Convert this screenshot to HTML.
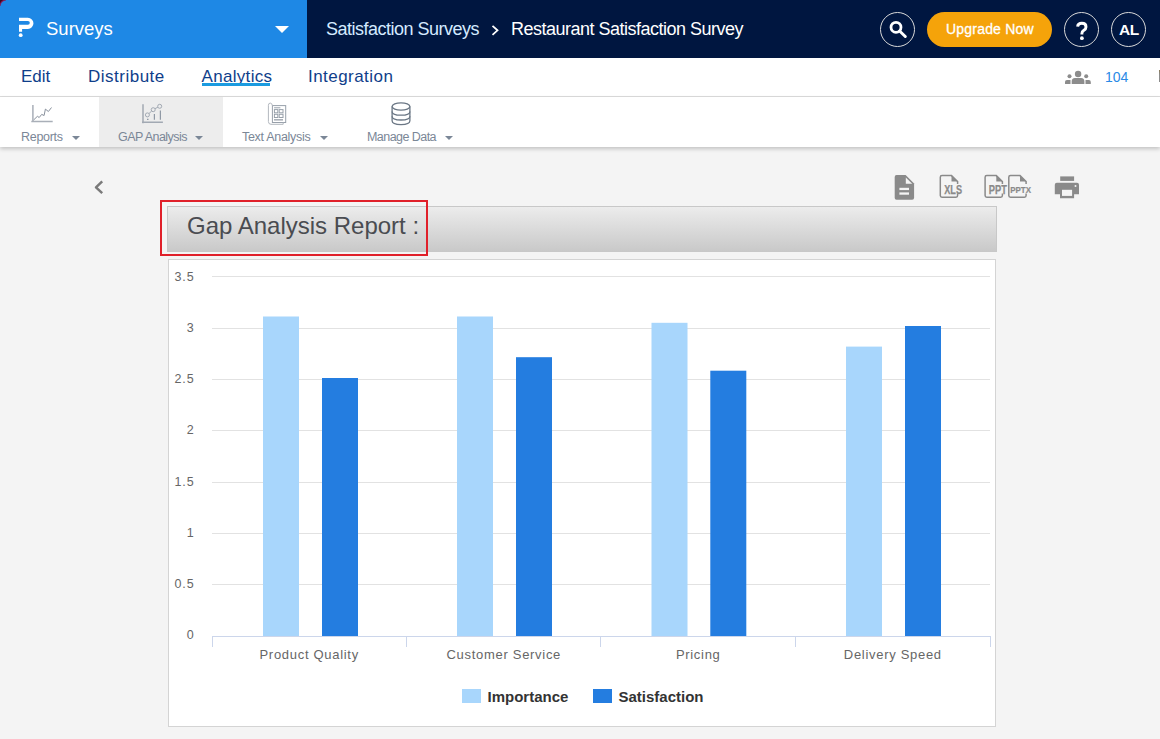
<!DOCTYPE html>
<html><head><meta charset="utf-8">
<style>
*{box-sizing:border-box;margin:0;padding:0}
html,body{width:1160px;height:739px;overflow:hidden;background:#f4f4f4;font-family:"Liberation Sans",sans-serif;position:relative}
.abs{position:absolute}
.t{position:absolute;white-space:nowrap;line-height:1}
.nv{color:#0f3e8a;font-size:17px}
.sl{color:#7b8797;font-size:12.5px;letter-spacing:-0.3px}
.tri{position:absolute;width:0;height:0;border-left:4px solid transparent;border-right:4px solid transparent;border-top:4px solid #7b8797;margin-top:0}
.circ{position:absolute;top:12px;width:35px;height:35px;border:1.2px solid #d8d8d8;border-radius:50%}
</style></head><body>
<!-- top bar -->
<div class="abs" style="left:0;top:0;width:1160px;height:58px;background:#001640"></div>
<div class="abs" style="left:0;top:0;width:307px;height:58px;background:#1e88e5"></div>
<svg class="abs" style="left:0;top:0" width="8" height="8" viewBox="0 0 8 8"><path d="M0 0 H6 A6 6 0 0 0 0 6 Z" fill="#3a0a1e"/><path d="M6 0 A6 6 0 0 0 0 6" fill="none" stroke="#a01050" stroke-width="1.2" opacity="0.7"/></svg>
<svg class="abs" style="left:0;top:0" width="40" height="45" viewBox="0 0 40 45">
 <path d="M19 17.8 H27.9 A5.55 5.55 0 0 1 27.9 28.9 H22.1 V31.8 H19 V24.7 H27.9 A1.9 1.9 0 0 0 27.9 20.9 H19 Z" fill="#fff"/>
 <circle cx="20.7" cy="35.2" r="1.9" fill="#fff"/>
</svg>
<div class="t" style="left:46px;top:20px;font-size:18.5px;color:#fff">Surveys</div>
<div class="abs" style="left:275px;top:26px;width:0;height:0;border-left:7px solid transparent;border-right:7px solid transparent;border-top:7px solid #fff"></div>
<div class="t" style="left:326px;top:20px;font-size:18px;color:#d4eaff;letter-spacing:-0.5px">Satisfaction Surveys</div>
<svg class="abs" style="left:488px;top:22px" width="14" height="16" viewBox="0 0 14 16"><path d="M4.5 3.8 L9.5 8.3 L4.5 12.8" fill="none" stroke="#fff" stroke-width="1.8"/></svg>
<div class="t" style="left:511px;top:20px;font-size:18px;color:#fff;letter-spacing:-0.5px">Restaurant Satisfaction Survey</div>
<div class="circ" style="left:880px"></div>
<svg class="abs" style="left:880px;top:12px" width="35" height="35" viewBox="0 0 35 35">
 <circle cx="16" cy="15.3" r="5" fill="none" stroke="#fff" stroke-width="2.8"/>
 <path d="M19.6 19 L25.3 24.5" stroke="#fff" stroke-width="3" stroke-linecap="round"/>
</svg>
<div class="abs" style="left:927px;top:12px;width:125px;height:35px;border-radius:18px;background:#f5a30a"></div>
<div class="t" style="left:946px;top:22px;font-size:14px;letter-spacing:0.2px;color:#fff;-webkit-text-stroke:0.3px #fff">Upgrade Now</div>
<div class="circ" style="left:1064px"></div>
<div class="circ" style="left:1111px"></div>
<svg class="abs" style="left:1064px;top:12px" width="35" height="35" viewBox="1064 12 35 35"><path d="M1077.6 26.6 Q1077.9 23.3 1081.9 23.3 Q1086 23.3 1086 26.9 Q1086 29.1 1083.6 30.6 Q1081.9 31.7 1081.9 33.6 V34.6" fill="none" stroke="#fff" stroke-width="2.9"/><circle cx="1081.9" cy="38.2" r="1.9" fill="#fff"/></svg>
<div class="t" style="left:1119px;top:22px;font-size:15.5px;color:#fff;font-weight:bold;letter-spacing:-0.4px">AL</div>

<!-- nav -->
<div class="abs" style="left:0;top:58px;width:1160px;height:39px;background:#fff;border-bottom:1px solid #dcdcdc"></div>
<div class="t nv" style="left:21px;top:68px">Edit</div>
<div class="t nv" style="left:88px;top:68px;letter-spacing:0.5px">Distribute</div>
<div class="t nv" style="left:201.6px;top:68px;letter-spacing:0.3px">Analytics</div>
<div class="abs" style="left:202px;top:83px;width:68px;height:3px;background:#1b9be0"></div>
<div class="t nv" style="left:308px;top:68px;letter-spacing:0.45px">Integration</div>
<svg class="abs" style="left:1060px;top:66px" width="35" height="22" viewBox="0 0 35 22">
 <g fill="#8c8c8c">
 <circle cx="18.1" cy="8" r="3.2"/>
 <path d="M11.7 18 V15.5 Q11.7 12 15 12 H21.2 Q24.4 12 24.4 15.5 V18 Z"/>
 <circle cx="9.5" cy="10.3" r="2"/>
 <path d="M5 18 V16 Q5 14 7 14 H10.5 V18 Z"/>
 <circle cx="26.2" cy="10.3" r="2"/>
 <path d="M25.5 18 V14 H28.8 Q30.8 14 30.8 16 V18 Z"/>
 </g>
</svg>
<div class="t" style="left:1105px;top:70px;font-size:14px;color:#2a8ae6">104</div>
<div class="abs" style="left:1159px;top:70px;width:1px;height:12px;background:linear-gradient(#8a7a58,#8c8c8c 40%)"></div>

<!-- subnav -->
<div class="abs" style="left:0;top:97px;width:1160px;height:50px;background:#fff;box-shadow:0 2px 4px rgba(0,0,0,.2)"></div>
<div class="abs" style="left:99px;top:97px;width:124px;height:50px;background:#ededed"></div>
<svg class="abs" style="left:0;top:97px" width="470" height="32" viewBox="0 97 470 32">
 <g fill="none" stroke="#a9afb8" stroke-width="1.5">
  <path d="M32.9 105 V122 M31.3 121.5 H52.7"/>
 </g>
 <path d="M33.7 119.9 L37.4 116.3 L39.2 117.5 L41.7 114.4 L44.1 115.5 L45.4 109.1 L48.4 111.5 L51.5 107.5" fill="none" stroke="#7c8592" stroke-width="0.9"/>
 <g fill="none" stroke="#a2a9b3" stroke-width="1.5">
  <path d="M143 104.2 V123.2 M142 122.3 H162.9"/>
 </g>
 <g fill="none" stroke="#a2a9b3" stroke-width="1">
  <circle cx="147.4" cy="114.9" r="2"/><circle cx="153.2" cy="109.7" r="2"/><circle cx="159.7" cy="106.3" r="2"/>
  <path d="M149 113.5 L151.6 111.1 M154.9 108.7 L157.9 107.2"/>
 </g>
 <g fill="none" stroke="#9099a5" stroke-width="1.2">
  <path d="M154.4 114 V119.7 M160.4 110.5 V119.7 M147 119.3 H148.5"/>
 </g>
 <g fill="none" stroke="#98a0aa" stroke-width="1">
  <rect x="272.4" y="105.6" width="13.3" height="16.9"/>
  <path d="M274.1 107.8 H280.4"/>
  <rect x="274.4" y="109.6" width="3.4" height="3.2"/><rect x="279.2" y="109.6" width="3.8" height="3.2"/>
  <rect x="274.4" y="114.3" width="3.4" height="3.2"/><rect x="279.2" y="114.3" width="3.8" height="3.2"/>
 </g>
 <path d="M272.4 105.6 Q272 103.1 270.3 103.1 Q268.4 103.1 268.4 105.3 V121.5 Q268.4 124.3 271 124.3 H283.2 V122.5" fill="none" stroke="#b3b8bf" stroke-width="1"/>
 <rect x="274" y="119" width="9" height="1.6" fill="#a9afb7"/>
 <g fill="none" stroke="#6b7785" stroke-width="1.3">
  <ellipse cx="401" cy="106.5" rx="8.9" ry="3.7"/>
  <path d="M392.1 106.5 V120.8 Q392.1 124.6 401 124.6 Q409.9 124.6 409.9 120.8 V106.5"/>
  <path d="M392.1 111.4 Q392.1 115.2 401 115.2 Q409.9 115.2 409.9 111.4"/>
  <path d="M392.1 116.2 Q392.1 120 401 120 Q409.9 120 409.9 116.2"/>
 </g>
</svg>
<div class="t sl" style="left:21px;top:131px">Reports</div>
<div class="tri" style="left:72px;top:136px"></div>
<div class="t sl" style="left:118px;top:131px;letter-spacing:-0.55px">GAP Analysis</div>
<div class="tri" style="left:195px;top:136px"></div>
<div class="t sl" style="left:242px;top:131px">Text Analysis</div>
<div class="tri" style="left:320px;top:136px"></div>
<div class="t sl" style="left:367px;top:131px;letter-spacing:-0.55px">Manage Data</div>
<div class="tri" style="left:445px;top:136px"></div>

<!-- back + export icons -->
<svg class="abs" style="left:85px;top:170px" width="30" height="30" viewBox="85 170 30 30">
 <path d="M102.2 181.4 L96 187.3 L102.2 193.1" fill="none" stroke="#7a7a7a" stroke-width="2.5" stroke-linejoin="round"/>
</svg>
<svg class="abs" style="left:880px;top:168px" width="210" height="36" viewBox="880 168 210 36">
 <path d="M896.5 175 H905.6 L914.1 183.5 V197.8 Q914.1 199.8 912.1 199.8 H896.5 Q894.7 199.8 894.7 197.8 V177 Q894.7 175 896.5 175 Z" fill="#8a8a8a"/>
 <path d="M905.8 177.4 V183.8 H912.2 Z" fill="#f4f4f4"/>
 <rect x="899.4" y="187.8" width="9.6" height="2.3" fill="#f4f4f4"/>
 <rect x="899.4" y="192.4" width="9.6" height="2.3" fill="#f4f4f4"/>
 <g fill="none" stroke="#8a8a8a" stroke-width="1.5">
  <path d="M957.6 184 V181.5 L951.5 175.6 H942 Q940.3 175.6 940.3 177.3 V195.6 Q940.3 197.3 942 197.3 H956 Q957.6 197.3 957.6 195.6 V193.5"/>
  <path d="M1002.4 184 V181.5 L996.3 175.6 H986.8 Q985.1 175.6 985.1 177.3 V195.6 Q985.1 197.3 986.8 197.3 H1000.8 Q1002.4 197.3 1002.4 195.6 V193.5"/>
  <path d="M1026.1 184 V181.5 L1020 175.6 H1010.5 Q1008.8 175.6 1008.8 177.3 V195.6 Q1008.8 197.3 1010.5 197.3 H1024.5 Q1026.1 197.3 1026.1 195.6 V193.5"/>
 </g>
 <path d="M951.5 175.6 L957.6 181.5 H951.5 Z M996.3 175.6 L1002.4 181.5 H996.3 Z M1020 175.6 L1026.1 181.5 H1020 Z" fill="#8a8a8a"/>
 <g font-family="Liberation Sans" font-weight="bold" fill="#8a8a8a">
  <text x="944.2" y="193.8" font-size="12.2" textLength="17.8" lengthAdjust="spacingAndGlyphs" stroke="#8a8a8a" stroke-width="0.25">XLS</text>
  <text x="988.8" y="193.8" font-size="12.2" textLength="18" lengthAdjust="spacingAndGlyphs" stroke="#8a8a8a" stroke-width="0.25">PPT</text>
  <text x="1010.2" y="192.9" font-size="9.4" textLength="20.8" lengthAdjust="spacingAndGlyphs" stroke="#8a8a8a" stroke-width="0.2">PPTX</text>
 </g>
 <rect x="1060.2" y="176.4" width="13.9" height="4.5" fill="#8a8a8a"/>
 <path d="M1056.8 182.7 H1077 Q1079 182.7 1079 184.7 V194.3 H1074.1 V198.2 H1060 V194.3 H1054.8 V184.7 Q1054.8 182.7 1056.8 182.7 Z" fill="#8a8a8a"/>
 <rect x="1062" y="189.8" width="10.1" height="6.1" fill="#f4f4f4"/>
 <circle cx="1075.5" cy="186.1" r="1" fill="#f4f4f4"/>
</svg>

<!-- report header -->
<div class="abs" style="left:167px;top:206px;width:830px;height:46px;border:1px solid #c8c8c8;background:linear-gradient(#ececec,#c9c9c9)"></div>
<div class="t" style="left:187px;top:214px;font-size:24px;color:#4a4c51;letter-spacing:0">Gap Analysis Report :</div>
<div class="abs" style="left:160px;top:200px;width:268px;height:56px;border:2px solid #e0202a"></div>

<!-- chart -->
<div class="abs" style="left:168px;top:259px;width:828px;height:468px;background:#fff;border:1px solid #d4d4d4"></div>
<!-- CHARTSVG -->
<svg class="abs" style="left:0;top:0" width="1160" height="739" viewBox="0 0 1160 739">
<rect x="212" y="584" width="778" height="1" fill="#e2e2e2"/>
<rect x="212" y="533" width="778" height="1" fill="#e2e2e2"/>
<rect x="212" y="482" width="778" height="1" fill="#e2e2e2"/>
<rect x="212" y="430" width="778" height="1" fill="#e2e2e2"/>
<rect x="212" y="379" width="778" height="1" fill="#e2e2e2"/>
<rect x="212" y="328" width="778" height="1" fill="#e2e2e2"/>
<rect x="212" y="276" width="778" height="1" fill="#e2e2e2"/>
<rect x="263" y="316.5" width="36" height="319.5" fill="#a8d6fc"/>
<rect x="322" y="378" width="36" height="258.0" fill="#247de0"/>
<rect x="457" y="316.5" width="36" height="319.5" fill="#a8d6fc"/>
<rect x="516" y="357.2" width="36" height="278.8" fill="#247de0"/>
<rect x="651.5" y="322.8" width="36" height="313.2" fill="#a8d6fc"/>
<rect x="710.3" y="370.7" width="36" height="265.3" fill="#247de0"/>
<rect x="846" y="346.6" width="36" height="289.4" fill="#a8d6fc"/>
<rect x="905" y="326" width="36" height="310.0" fill="#247de0"/>
<rect x="212" y="636" width="779" height="1" fill="#ccd6eb"/>
<rect x="212" y="636" width="1" height="11" fill="#ccd6eb"/>
<rect x="406" y="636" width="1" height="11" fill="#ccd6eb"/>
<rect x="600" y="636" width="1" height="11" fill="#ccd6eb"/>
<rect x="795" y="636" width="1" height="11" fill="#ccd6eb"/>
<rect x="990" y="636" width="1" height="11" fill="#ccd6eb"/>
<g font-family="Liberation Sans" font-size="12.5" fill="#666" letter-spacing="0.9">
<text x="194.6" y="639" text-anchor="end">0</text>
<text x="194.6" y="587.9" text-anchor="end">0.5</text>
<text x="194.6" y="536.9" text-anchor="end">1</text>
<text x="194.6" y="485.9" text-anchor="end">1.5</text>
<text x="194.6" y="433.9" text-anchor="end">2</text>
<text x="194.6" y="382.9" text-anchor="end">2.5</text>
<text x="194.6" y="331.9" text-anchor="end">3</text>
<text x="194.6" y="280.9" text-anchor="end">3.5</text>
</g>
<g font-family="Liberation Sans" font-size="13" fill="#666" letter-spacing="0.7">
<text x="309.2" y="658.8" text-anchor="middle">Product Quality</text>
<text x="503.8" y="658.8" text-anchor="middle">Customer Service</text>
<text x="698.2" y="658.8" text-anchor="middle">Pricing</text>
<text x="892.8" y="658.8" text-anchor="middle">Delivery Speed</text>
</g>
<rect x="462" y="689" width="19" height="14" fill="#a8d6fc"/>
<rect x="593" y="689" width="19" height="14" fill="#247de0"/>
<g font-family="Liberation Sans" font-size="15" font-weight="bold" fill="#333">
<text x="487.5" y="702">Importance</text>
<text x="618.5" y="702">Satisfaction</text>
</g>
</svg>
</body></html>
